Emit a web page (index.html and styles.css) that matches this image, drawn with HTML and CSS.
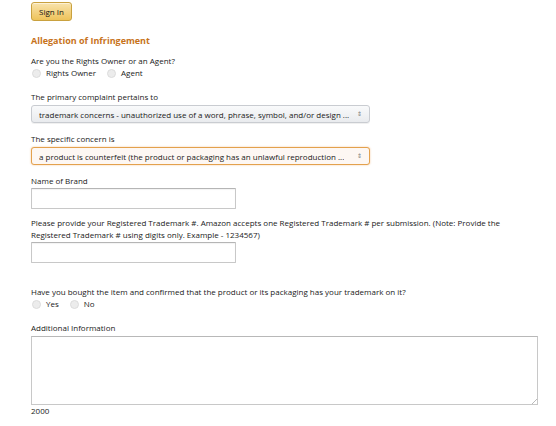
FILE: index.html
```html
<!DOCTYPE html>
<html>
<head>
<meta charset="utf-8">
<link rel="stylesheet" href="styles.css">
</head>
<body>
<div class="page">
  <div class="signin-row"><button class="btn-signin">Sign In</button></div>
  <h2 class="section-title">Allegation of Infringement</h2>

  <div class="label first">Are you the Rights Owner or an Agent?</div>
  <div class="radios">
    <span class="radio-item"><span class="radio"></span>Rights Owner</span>
    <span class="radio-item"><span class="radio"></span>Agent</span>
  </div>

  <div class="label gap">The primary complaint pertains to</div>
  <div class="select"><span class="sel-text">trademark concerns - unauthorized use of a word, phrase, symbol, and/or design ...</span><span class="arrow">⇕</span></div>

  <div class="label after-field">The specific concern is</div>
  <div class="select focused"><span class="sel-text">a product is counterfeit (the product or packaging has an unlawful reproduction ...</span><span class="arrow">⇕</span></div>

  <div class="label after-field">Name of Brand</div>
  <div class="input"></div>

  <div class="label para">Please provide your Registered Trademark #. Amazon accepts one Registered Trademark # per submission. (Note: Provide the Registered Trademark # using digits only. Example - 1234567)</div>
  <div class="input"></div>

  <div class="label big-gap">Have you bought the item and confirmed that the product or its packaging has your trademark on it?</div>
  <div class="radios">
    <span class="radio-item"><span class="radio"></span>Yes</span>
    <span class="radio-item"><span class="radio"></span>No</span>
  </div>

  <div class="label gap">Additional Information</div>
  <div class="textarea"><span class="grip"></span></div>
  <div class="counter">2000</div>
</div>
</body>
</html>
```
FILE: styles.css
```css
html, body {
  margin: 0;
  padding: 0;
  background: #fff;
}
body {
  font-family: "Open Sans", "Noto Sans", sans-serif;
  font-size: 8px;
  color: #1a1a1a;
}
.page {
  padding: 2px 18px 0 31px;
}
.signin-row {
  height: 19px;
}
.btn-signin {
  display: block;
  width: 41px;
  height: 19px;
  margin: 0;
  padding: 0;
  border: 1px solid #c9a13f;
  border-radius: 3px;
  background: linear-gradient(#f8e3ad, #eec35a);
  font-family: inherit;
  font-size: 8px;
  color: #111;
  box-shadow: 0 1px 0 rgba(255,255,255,.5) inset;
}
.section-title {
  margin: 14px 0 0;
  font-size: 9px;
  line-height: 12px;
  font-weight: 700;
  color: #c7731b;
}
.label {
  line-height: 12px;
}
.label.first {
  margin-top: 8px;
}
.label.gap {
  margin-top: 12px;
}
.label.after-field {
  margin-top: 10px;
}
.label.para {
  margin-top: 8px;
}
.label.big-gap {
  margin-top: 23px;
}
.radios {
  display: flex;
  gap: 10px;
  height: 12px;
  align-items: center;
  line-height: 12px;
}
.radio-item {
  display: flex;
  align-items: center;
  gap: 5px;
}
.radio {
  width: 9px;
  height: 9px;
  border-radius: 50%;
  background: #ececec;
  border: 1px solid #dcdcdc;
  box-sizing: border-box;
  margin-left: 1px;
}
.select {
  margin-top: 2px;
  width: 339px;
  height: 18px;
  box-sizing: border-box;
  border: 1px solid #c9ccd1;
  border-radius: 3px;
  background: linear-gradient(#f9fafb, #e9ebee);
  display: flex;
  align-items: center;
  padding: 0 7px 0 7px;
  justify-content: space-between;
  box-shadow: 0 1px 0 rgba(0,0,0,.06);
}
.select.focused {
  border-color: #e3a14d;
  background: #fdf7f3;
  box-shadow: 0 0 2px rgba(228,121,17,.45);
}
.sel-text {
  white-space: nowrap;
  overflow: hidden;
}
.arrow {
  font-size: 6px;
  color: #777;
}
.input {
  margin-top: 1px;
  width: 205px;
  height: 21px;
  box-sizing: border-box;
  border: 1px solid #c8c8c8;
  border-top-color: #b5b5b5;
  border-radius: 1px;
  background: #fff;
  box-shadow: 0 1px 1px rgba(0,0,0,.05) inset;
}
.textarea {
  position: relative;
  margin-top: 2px;
  width: 507px;
  height: 69px;
  box-sizing: border-box;
  border: 1px solid #c8c8c8;
  border-top-color: #b8b8b8;
  background: #fff;
}
.grip {
  position: absolute;
  right: 0;
  bottom: 0;
  width: 5px;
  height: 5px;
  background: linear-gradient(135deg, transparent 50%, #bbb 50%, #bbb 60%, transparent 60%);
}
.counter {
  line-height: 12px;
  color: #222;
}
```
